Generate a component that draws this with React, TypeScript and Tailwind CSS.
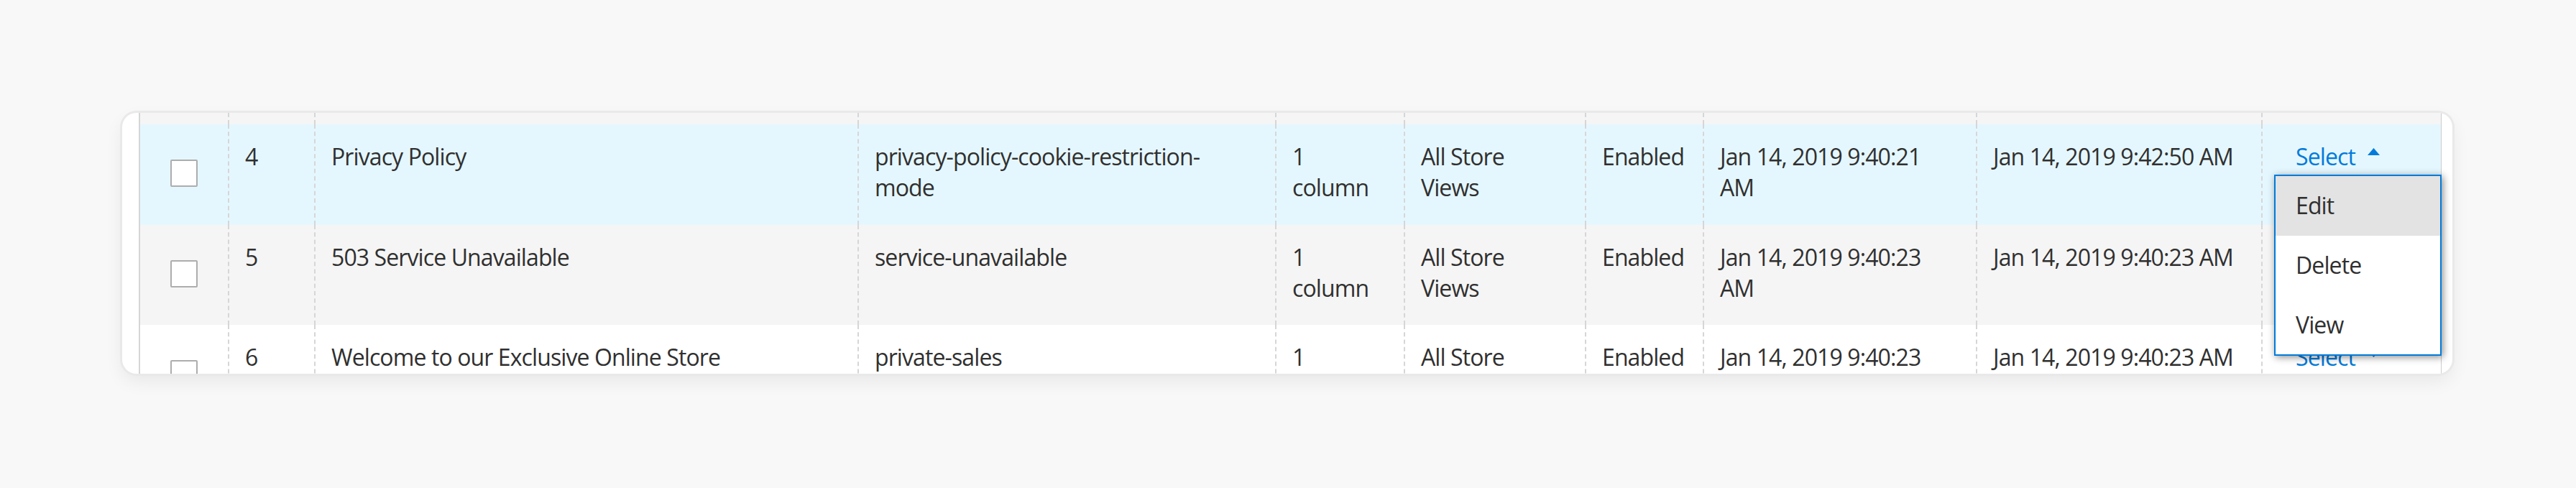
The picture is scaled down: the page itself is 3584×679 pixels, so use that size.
import React from "react";

type Row = {
  id: string;
  title: string;
  url: string[];
  layout: string[];
  store: string[];
  status: string;
  created: string[];
  modified: string;
  bg: string;
  h: string;
  open?: boolean;
};

const rows: Row[] = [
  {
    id: "4",
    title: "Privacy Policy",
    url: ["privacy-policy-cookie-restriction-", "mode"],
    layout: ["1", "column"],
    store: ["All Store", "Views"],
    status: "Enabled",
    created: ["Jan 14, 2019 9:40:21", "AM"],
    modified: "Jan 14, 2019 9:42:50 AM",
    bg: "bg-[#e5f7fe]",
    h: "h-[140px]",
    open: true,
  },
  {
    id: "5",
    title: "503 Service Unavailable",
    url: ["service-unavailable"],
    layout: ["1", "column"],
    store: ["All Store", "Views"],
    status: "Enabled",
    created: ["Jan 14, 2019 9:40:23", "AM"],
    modified: "Jan 14, 2019 9:40:23 AM",
    bg: "bg-[#f5f5f5]",
    h: "h-[139px]",
  },
  {
    id: "6",
    title: "Welcome to our Exclusive Online Store",
    url: ["private-sales"],
    layout: ["1", "column"],
    store: ["All Store", "Views"],
    status: "Enabled",
    created: ["Jan 14, 2019 9:40:23", "AM"],
    modified: "Jan 14, 2019 9:40:23 AM",
    bg: "bg-white",
    h: "h-[139px]",
  },
];

const gridCols =
  "grid grid-cols-[122px_120px_756px_581px_179px_252px_164px_380px_397px_250px]";

const cell = "border-l-2 border-dashed border-[#d6d6d6] pl-[22px] pr-[22px] pt-[23px]";

function Lines({ lines }: { lines: string[] }) {
  return (
    <>
      {lines.map((l, i) => (
        <span key={i} className="block whitespace-nowrap">
          {l}
        </span>
      ))}
    </>
  );
}

function Triangle({ up }: { up: boolean }) {
  return (
    <svg width="17" height="10" viewBox="0 0 17 10" className="block">
      {up ? (
        <polygon points="0,10 8.5,0 17,10" fill="#007bdb" />
      ) : (
        <polygon points="0,0 17,0 8.5,10" fill="#007bdb" />
      )}
    </svg>
  );
}

function Checkbox() {
  return (
    <div className="flex justify-center pt-[49px]">
      <div className="h-[38px] w-[38px] rounded-[2px] border-2 border-[#adadad] bg-white" />
    </div>
  );
}

function DataRow({ r }: { r: Row }) {
  return (
    <div className={`${gridCols} ${r.bg} ${r.h} shrink-0`}>
      <Checkbox />
      <div className={cell}>{r.id}</div>
      <div className={cell}>{r.title}</div>
      <div className={cell}>
        <Lines lines={r.url} />
      </div>
      <div className={cell}>
        <Lines lines={r.layout} />
      </div>
      <div className={cell}>
        <Lines lines={r.store} />
      </div>
      <div className={cell}>{r.status}</div>
      <div className={cell}>
        <Lines lines={r.created} />
      </div>
      <div className={cell}>
        <span className="whitespace-nowrap">{r.modified}</span>
      </div>
      <div className="relative border-l-2 border-dashed border-[#d6d6d6] pl-[46px] pt-[23px]">
        <div className="flex items-center gap-[17px] text-[#007bdb]">
          <span>Select</span>
          <span className={r.open ? "mt-[-13px]" : "mt-[-10px]"}>
            <Triangle up={!!r.open} />
          </span>
        </div>
        {r.open && (
          <div className="absolute left-[16px] top-[70px] z-10 w-[233px] border-2 border-[#007bdb] bg-white shadow-[2px_2px_10px_rgba(0,0,0,0.45)]">
            <div className="h-[83px] bg-[#e3e3e3] pl-[28px] pt-[19px] text-[#303030]">Edit</div>
            <div className="h-[83px] pl-[28px] pt-[19px] text-[#303030]">Delete</div>
            <div className="h-[82px] pl-[28px] pt-[19px] text-[#303030]">View</div>
          </div>
        )}
      </div>
    </div>
  );
}

export default function App() {
  return (
    <div
      className="h-[679px] w-[3584px] bg-[#f8f8f8] pl-[170px] pt-[157px] text-[32px] leading-[43px] tracking-[-0.9px] text-[#303030]"
      style={{ fontFamily: '"Open Sans", "Noto Sans", sans-serif' }}
    >
      <div className="flex h-[363px] w-[3242px] overflow-hidden rounded-[20px] bg-white pl-[23px] pr-[15px] shadow-[0_0_0_3px_#e9e9e9,0_10px_26px_rgba(0,0,0,0.07)]">
        <div className="flex w-[3204px] flex-col border-l-2 border-r border-[#d6d6d6] border-r-[#cccccc]">
          <div className={`${gridCols} h-[16px] shrink-0 bg-[#f5f5f5]`}>
            <div />
            <div className="border-l-2 border-dashed border-[#d6d6d6]" />
            <div className="border-l-2 border-dashed border-[#d6d6d6]" />
            <div className="border-l-2 border-dashed border-[#d6d6d6]" />
            <div className="border-l-2 border-dashed border-[#d6d6d6]" />
            <div className="border-l-2 border-dashed border-[#d6d6d6]" />
            <div className="border-l-2 border-dashed border-[#d6d6d6]" />
            <div className="border-l-2 border-dashed border-[#d6d6d6]" />
            <div className="border-l-2 border-dashed border-[#d6d6d6]" />
            <div className="border-l-2 border-dashed border-[#d6d6d6]" />
          </div>
          {rows.map((r) => (
            <DataRow key={r.id} r={r} />
          ))}
        </div>
      </div>
    </div>
  );
}
